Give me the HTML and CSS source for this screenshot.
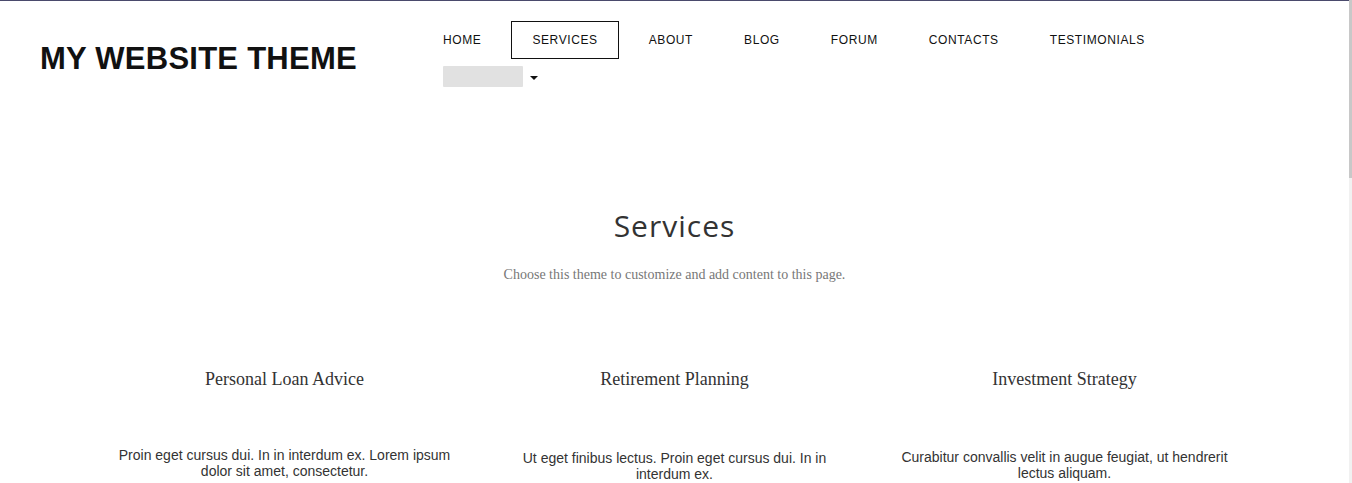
FILE: index.html
```html
<!DOCTYPE html>
<html lang="en">
<head>
<meta charset="utf-8">
<title>My Website Theme - Services</title>
<link rel="stylesheet" href="styles.css">
</head>
<body>
<div class="frame">
  <div class="page">
    <header class="header">
      <div class="logo">MY WEBSITE THEME</div>
      <nav class="nav">
        <a class="nav-link">HOME</a>
        <a class="nav-link active">SERVICES</a>
        <a class="nav-link">ABOUT</a>
        <a class="nav-link">BLOG</a>
        <a class="nav-link">FORUM</a>
        <a class="nav-link">CONTACTS</a>
        <a class="nav-link">TESTIMONIALS</a>
        <div class="nav-more">
          <span class="blur-box"></span>
          <span class="caret"></span>
        </div>
      </nav>
    </header>
    <main class="main">
      <h1 class="title">Services</h1>
      <p class="subtitle">Choose this theme to customize and add content to this page.</p>
      <div class="cols">
        <div class="col">
          <h3 class="col-title">Personal Loan Advice</h3>
          <p class="col-text">Proin eget cursus dui. In in interdum ex. Lorem ipsum dolor sit amet, consectetur.</p>
        </div>
        <div class="col">
          <h3 class="col-title">Retirement Planning</h3>
          <p class="col-text col-text-low">Ut eget finibus lectus. Proin eget cursus dui. In in interdum ex.</p>
        </div>
        <div class="col">
          <h3 class="col-title">Investment Strategy</h3>
          <p class="col-text col-text-mid">Curabitur convallis velit in augue feugiat, ut hendrerit lectus aliquam.</p>
        </div>
      </div>
    </main>
  </div>
  <div class="scrollbar"><div class="thumb"></div></div>
</div>
</body>
</html>
```
FILE: styles.css
```css
html, body {
  margin: 0;
  padding: 0;
  background: #ffffff;
  height: 100%;
  overflow: hidden;
}

.frame {
  display: flex;
  height: 483px;
}

.page {
  flex: 1;
  border-top: 1px solid #4a4a6c;
  min-width: 0;
}

.scrollbar {
  width: 3px;
  background: #f1f1f1;
  display: flex;
  flex-direction: column;
}

.thumb {
  height: 178px;
  background: #c8c8c8;
}

.header {
  display: flex;
  align-items: flex-start;
}

.logo {
  width: 422px;
  box-sizing: border-box;
  margin-top: 40px;
  padding-left: 40px;
  font-family: "Liberation Sans", Arial, sans-serif;
  font-weight: 700;
  font-size: 31px;
  line-height: 36px;
  letter-spacing: 0.25px;
  color: #111111;
  white-space: nowrap;
}

.nav {
  display: flex;
  flex-wrap: wrap;
  column-gap: 9px;
  width: 820px;
  margin-top: 20px;
}

.nav-link {
  display: block;
  border: 1px solid transparent;
  padding: 11px 20px;
  font-family: "Liberation Sans", Arial, sans-serif;
  font-size: 12px;
  line-height: 14px;
  letter-spacing: 0.6px;
  color: #111111;
}

.nav-link.active {
  border-color: #111111;
}

.nav-more {
  display: flex;
  align-items: center;
  gap: 7px;
  margin-top: 7px;
  padding-left: 21px;
}

.blur-box {
  display: block;
  width: 80px;
  height: 21px;
  background: #e1e1e1;
  border-radius: 1px;
  filter: blur(0.5px);
}

.caret {
  display: block;
  width: 0;
  height: 0;
  border-left: 4px solid transparent;
  border-right: 4px solid transparent;
  border-top: 4px solid #111111;
  margin-top: 3px;
}

.main {
  display: flex;
  flex-direction: column;
  align-items: center;
}

.title {
  margin: 121px 0 0;
  font-family: "Open Sans", sans-serif;
  font-weight: 400;
  font-size: 30px;
  line-height: 36px;
  letter-spacing: 1px;
  color: #333333;
}

.subtitle {
  margin: 21px 0 0;
  font-family: "Liberation Serif", "Times New Roman", serif;
  font-size: 14px;
  line-height: 20px;
  color: #777777;
}

.cols {
  display: flex;
  width: 1170px;
  margin-top: 82px;
}

.col {
  flex: 1;
  padding: 0 18px;
  text-align: center;
}

.col-title {
  margin: 0;
  font-family: "Liberation Serif", "Times New Roman", serif;
  font-weight: 400;
  font-size: 18px;
  line-height: 24px;
  color: #333333;
}

.col-text {
  margin: 56px 0 0;
  font-family: "Liberation Sans", Arial, sans-serif;
  font-size: 14px;
  line-height: 16px;
  color: #333333;
}

.col-text-low {
  margin-top: 59px;
}

.col-text-mid {
  margin-top: 58px;
}
```
